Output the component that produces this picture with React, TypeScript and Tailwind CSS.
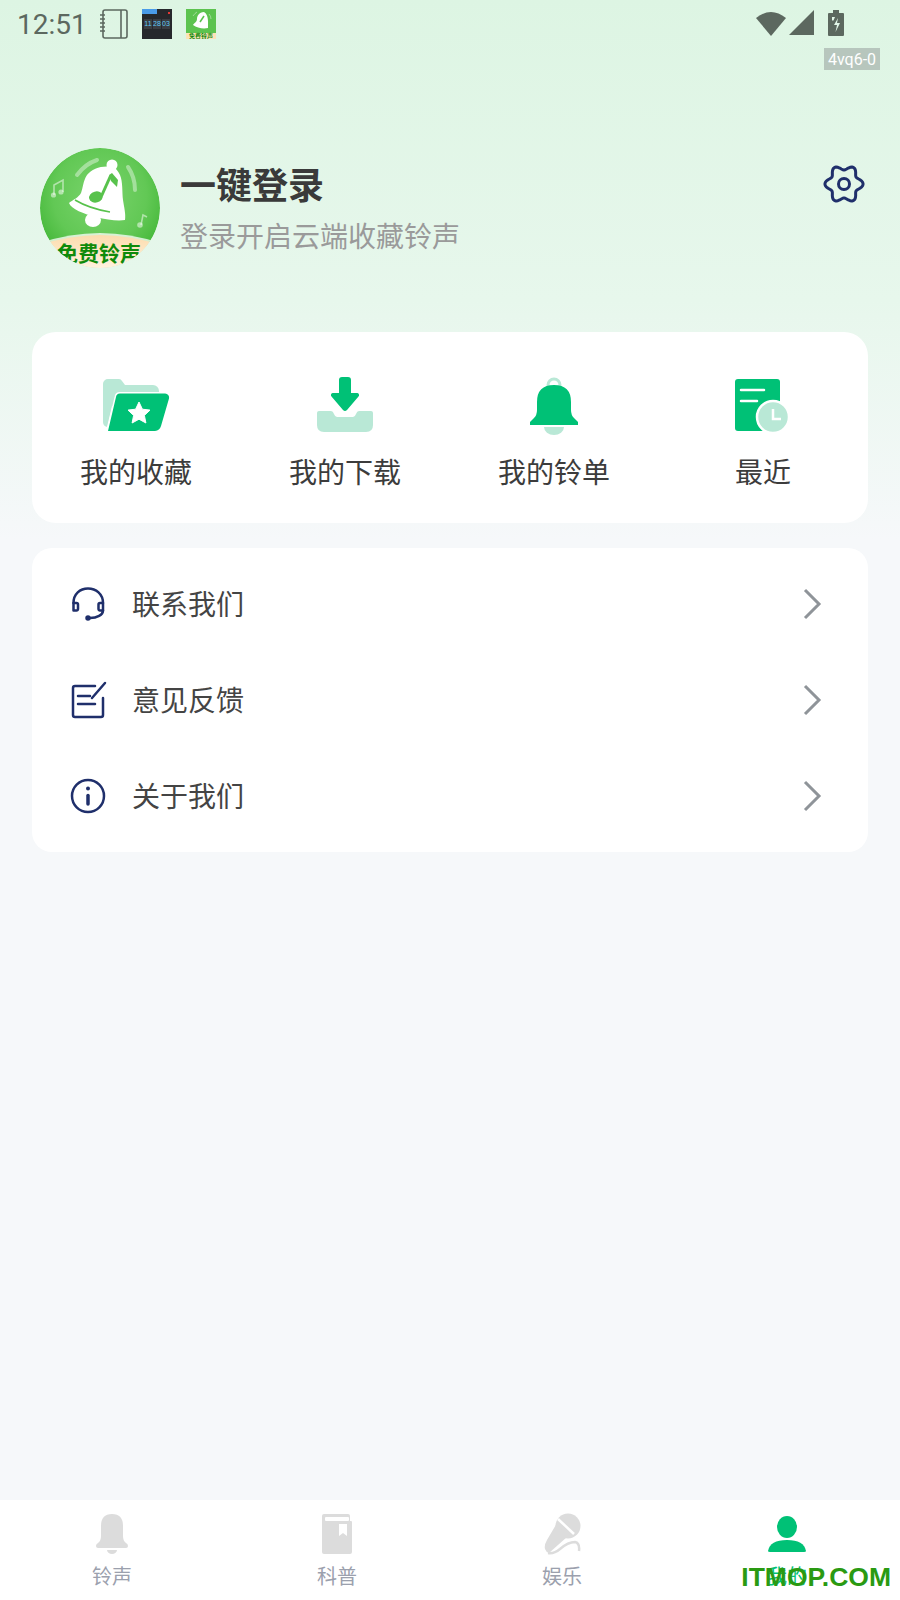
const NAVY = "#1f2f6b";
const GREEN = "#00c176";
const MINT = "#b9e8d6";
const GRAY = "#dcdcdc";

// wavy six-lobed outline for the settings gear
function gearPath(cx: number, cy: number) {
  const pts: string[] = [];
  for (let i = 0; i < 72; i++) {
    const a = (i / 72) * Math.PI * 2;
    const r = 16.5 + 2.6 * Math.cos(6 * a);
    pts.push(`${(cx + r * Math.cos(a)).toFixed(2)} ${(cy + r * Math.sin(a)).toFixed(2)}`);
  }
  return `M${pts.join("L")}Z`;
}

function BellLogo({ className }: { className?: string }) {
  return (
    <svg viewBox="0 0 120 120" className={className}>
      <defs>
        <radialGradient id="logoBg" cx="0.5" cy="0.4" r="0.6">
          <stop offset="0" stopColor="#7ad46c" />
          <stop offset="0.65" stopColor="#62c855" />
          <stop offset="1" stopColor="#43b738" />
        </radialGradient>
        <linearGradient id="logoBand" x1="0" y1="0" x2="0" y2="1">
          <stop offset="0" stopColor="#fcdcae" />
          <stop offset="1" stopColor="#fff2de" />
        </linearGradient>
      </defs>
      <circle cx="60" cy="60" r="60" fill="url(#logoBg)" />
      <path d="M37 27Q45 16 57 12" fill="none" stroke="#fff" strokeOpacity="0.4" strokeWidth="4" strokeLinecap="round" />
      <path d="M88 19Q95 29 95 42" fill="none" stroke="#fff" strokeOpacity="0.4" strokeWidth="4" strokeLinecap="round" />
      <path d="M14 47V37L23 32V44" fill="none" stroke="#fff" strokeOpacity="0.5" strokeWidth="1.6" />
      <circle cx="13.500" cy="47" r="2.600" fill="#fff" fillOpacity="0.5" />
      <circle cx="21" cy="44" r="2.600" fill="#fff" fillOpacity="0.5" />
      <path d="M101 77L103 67L107 69" fill="none" stroke="#fff" strokeOpacity="0.5" strokeWidth="1.6" />
      <circle cx="100" cy="77" r="2.800" fill="#fff" fillOpacity="0.5" />
      <ellipse cx="53" cy="72" rx="8" ry="7" fill="#fff" />
      <path d="M73 19C63 17 52 20 47 27C43 33 43 40 41 45C39 49 33 52 29 55C31 61 44 66 56 69C67 72 78 73 85 72C86 66 84 59 83 52C82 44 83 34 80 27C78 23 76 20 73 19Z" fill="#fff" />
      <circle cx="72" cy="17" r="5.500" fill="#fff" />
      <path d="M35 52C45 58 58 62 70 64" fill="none" stroke="#58c24c" strokeWidth="1.600" />
      <ellipse cx="56" cy="49" rx="7" ry="5.500" fill="#58c24c" transform="rotate(-15 56 49)" />
      <path d="M61.500 48L70.500 28" fill="none" stroke="#58c24c" strokeWidth="3" />
      <path d="M69 27L72 25L78 32L77 39L71 33Z" fill="#58c24c" />
      <path d="M0 95Q60 75 120 95V120H0Z" fill="#fff" fillOpacity="0.75" />
      <path d="M0 97Q60 77 120 97V120H0Z" fill="url(#logoBand)" />
    </svg>
  );
}

function MiniClock() {
  return (
    <div className="w-[30px] h-[30px] bg-[#26282c] flex flex-col relative">
      <div className="w-[15px] h-[5px] bg-[#4a9be8]" />
      <div className="absolute right-[2px] top-[3px] w-[2px] h-[2px] bg-[#e53935]" />
      <div className="mt-[5px] flex justify-center gap-[1px] text-[7px] leading-[10px] text-[#5cc8f5] font-['Liberation_Sans',sans-serif]">
        <span className="w-[8px] bg-[#3a3d42] text-center">11</span>
        <span className="w-[8px] bg-[#3a3d42] text-center">28</span>
        <span className="w-[8px] bg-[#3a3d42] text-center">03</span>
      </div>
    </div>
  );
}

function MiniLogo() {
  return (
    <div className="w-[30px] h-[30px] bg-[#5cc34f] flex flex-col items-center overflow-hidden">
      <svg viewBox="0 0 30 24" className="w-[30px] h-[24px]">
        <path d="M18 3C13 3 11 7 11 10C11 13 8 14 7 16C11 19 17 20 22 19C22 14 23 6 18 3Z" fill="#fff" />
        <path d="M14 13L18 7" stroke="#58c24c" strokeWidth="1.5" />
        <path d="M7 7Q9 4 11 3M23 5Q25 7 25 10" stroke="#fff" strokeOpacity="0.4" fill="none" />
      </svg>
      <div className="w-[30px] h-[6px] bg-[#fde2b8] text-[6px] leading-[6px] font-bold text-center text-[#0f8a0a]">免费铃声</div>
    </div>
  );
}

function StatusBar() {
  return (
    <div className="h-[48px] flex items-start pl-[17px] pt-[9px] text-[#5c685f]">
      <span className="w-[83px] text-[28px] leading-[32px] font-['Roboto',sans-serif]">12:51</span>
      <svg width="28" height="30" viewBox="0 0 28 30" fill="none" stroke="#5c685f" strokeWidth="1.6">
        <rect x="3" y="1" width="24" height="28" rx="2" />
        <path d="M21 1V29M0 6H5M0 10H5M0 14H5M0 18H5M0 22H5" />
      </svg>
      <div className="ml-[14px]"><MiniClock /></div>
      <div className="ml-[14px]"><MiniLogo /></div>
      <div className="ml-auto flex items-start pr-[56px] pt-[1px]">
        <svg width="30" height="26" viewBox="0 0 30 26"><path d="M0 8Q15 -4 30 8L15 26Z" fill="#5c685f" /></svg>
        <svg width="25" height="25" viewBox="0 0 25 25" className="ml-[3px]"><path d="M25 0V25H0Z" fill="#5c685f" /></svg>
        <svg width="16" height="26" viewBox="0 0 16 26" className="ml-[14px]">
          <path d="M5 0H11V3H15A1 1 0 0 1 16 4V25A1 1 0 0 1 15 26H1A1 1 0 0 1 0 25V4A1 1 0 0 1 1 3H5Z" fill="#5c685f" />
          <path d="M10 8L6 15H9L7.500 22L12 13H9Z" fill="#e2f6e8" />
          <path d="M4 7H7L5.500 10.500H4Z" fill="#e2f6e8" />
        </svg>
      </div>
    </div>
  );
}

function Header() {
  return (
    <div className="mt-[100px] ml-[40px] mr-[34px] h-[120px] flex items-start">
      <div className="relative w-[120px] h-[120px] rounded-full overflow-hidden shrink-0">
        <BellLogo className="w-[120px] h-[120px]" />
        <span className="absolute left-[17px] top-[91px] text-[21px] leading-[26px] font-bold whitespace-nowrap text-[#0f8a0a]">免费铃声</span>
      </div>
      <div className="ml-[20px] pt-[12px]">
        <div className="text-[36px] leading-[46px] font-bold text-[#3a3a3a]">一键登录</div>
        <div className="mt-[10px] text-[28px] leading-[38px] text-[#9a9a9a]">登录开启云端收藏铃声</div>
      </div>
      <svg width="44" height="44" viewBox="0 0 44 44" fill="none" stroke={NAVY} strokeWidth="3" className="ml-auto mt-[14px]">
        <path d={gearPath(22, 22)} strokeLinejoin="round" />
        <circle cx="22" cy="22" r="5.500" />
      </svg>
    </div>
  );
}

const FolderIcon = (
  <svg width="72" height="58" viewBox="0 0 72 58">
    <path d="M3 8A5 5 0 0 1 8 3H19A4 4 0 0 1 22 5L25 9H53A6 6 0 0 1 59 15V30H12L7 51Q3 50 3 46Z" fill={MINT} />
    <path d="M20 17.500H65A4 4 0 0 1 69 22.500L61 50A7 7 0 0 1 55 55H8L16 21A4 4 0 0 1 20 17.500Z" fill={GREEN} stroke="#fff" strokeWidth="3" paintOrder="stroke" />
    <path d="M39 26L42.400 33.200L50 34.100L44.400 39.400L45.900 47L39 43.200L32.100 47L33.600 39.400L28 34.100L35.600 33.200Z" fill="#fff" stroke="#fff" strokeLinejoin="round" />
  </svg>
);

const DownloadIcon = (
  <svg width="58" height="58" viewBox="0 0 58 58">
    <path d="M3 35H15Q17 35 18 38Q19 41 21 41H37Q39 41 40 38Q41 35 43 35H55Q57 35 57 37V49Q57 56 50 56H8Q1 56 1 49V37Q1 35 3 35Z" fill={MINT} />
    <path d="M23 4A3 3 0 0 1 26 1H32A3 3 0 0 1 35 4V17H41A2 2 0 0 1 42.500 20.400L31 34A3 3 0 0 1 27 34L15.500 20.400A2 2 0 0 1 17 17H23Z" fill={GREEN} />
  </svg>
);

const BellIcon = (
  <svg width="56" height="62" viewBox="0 0 56 62">
    <circle cx="28" cy="9" r="6" fill="none" stroke={MINT} strokeWidth="3" />
    <path d="M4 49V46L8 42Q11 39 11 34V26Q11 9 28 9Q45 9 45 26V34Q45 39 48 42L52 46V49Z" fill={GREEN} />
    <path d="M18 51H38A10 8 0 0 1 18 51Z" fill={MINT} />
  </svg>
);

const RecentIcon = (
  <svg width="62" height="58" viewBox="0 0 62 58">
    <rect x="3" y="3" width="45" height="52" rx="3" fill={GREEN} />
    <path d="M9 14H32M9 25H25" stroke="#fff" strokeWidth="2.500" strokeLinecap="round" />
    <circle cx="41" cy="41" r="16" fill={MINT} stroke="#fff" strokeWidth="2.500" />
    <path d="M41 33V43H49" fill="none" stroke="#fff" strokeWidth="2.500" />
  </svg>
);

const shortcuts = [
  { label: "我的收藏", icon: FolderIcon },
  { label: "我的下载", icon: DownloadIcon },
  { label: "我的铃单", icon: BellIcon },
  { label: "最近", icon: RecentIcon },
];

const HeadsetIcon = (
  <svg width="40" height="40" viewBox="0 0 40 40" fill="none" stroke={NAVY} strokeWidth="2.500" strokeLinecap="round" strokeLinejoin="round">
    <path d="M5.500 19C5.500 10 12 4.500 20 4.500S35 10 35 19" />
    <path d="M5.500 19H8.500A1.500 1.500 0 0 1 10 20.500V25A1.500 1.500 0 0 1 8.500 26.500H5.500Z" />
    <path d="M35 19H32A1.500 1.500 0 0 0 30.500 20.500V25A1.500 1.500 0 0 0 32 26.500H35Z" />
    <path d="M35 26.500C35 31 29 34 22 34" />
    <circle cx="20" cy="34" r="1.500" fill={NAVY} />
  </svg>
);

const FeedbackIcon = (
  <svg width="40" height="40" viewBox="0 0 40 40" fill="none" stroke={NAVY} strokeWidth="2.500" strokeLinecap="round" strokeLinejoin="round">
    <path d="M27 6H7A2 2 0 0 0 5 8V35A2 2 0 0 0 7 37H33A2 2 0 0 0 35 35V18" />
    <path d="M24 18L37 3" />
    <path d="M10 16H22M10 24H27" />
  </svg>
);

const InfoIcon = (
  <svg width="40" height="40" viewBox="0 0 40 40" fill="none" stroke={NAVY} strokeWidth="2.500" strokeLinecap="round">
    <circle cx="20" cy="20" r="16" />
    <circle cx="20" cy="12.500" r="2" fill={NAVY} stroke="none" />
    <path d="M20 19.500V28" strokeWidth="3.500" />
  </svg>
);

const links = [
  { label: "联系我们", icon: HeadsetIcon },
  { label: "意见反馈", icon: FeedbackIcon },
  { label: "关于我们", icon: InfoIcon },
];

const tabs = [
  {
    label: "铃声",
    icon: (
      <svg width="36" height="42" viewBox="0 0 36 42" fill={GRAY}>
        <path d="M2 33Q2 31 4 30Q7 28 7 23V13Q7 1 18 1Q29 1 29 13V23Q29 28 32 30Q34 31 34 33Q34 35 32 35H4Q2 35 2 33Z" />
        <path d="M13 37H23A5 4 0 0 1 13 37Z" />
      </svg>
    ),
  },
  {
    label: "科普",
    icon: (
      <svg width="36" height="42" viewBox="0 0 36 42">
        <path d="M3 3A2 2 0 0 1 5 1H29A2 2 0 0 1 31 3V8H32A1 1 0 0 1 33 9V39A2 2 0 0 1 31 41H5A2 2 0 0 1 3 39Z" fill={GRAY} />
        <rect x="6" y="4" width="24" height="4" rx="1" fill="#fff" />
        <path d="M20 11H28V23L24 20L20 23Z" fill="#fff" />
      </svg>
    ),
  },
  {
    label: "娱乐",
    icon: (
      <svg width="40" height="42" viewBox="0 0 40 42" fill="none">
        <circle cx="26" cy="13" r="12.500" fill={GRAY} />
        <path d="M15 10L5 27Q2 32 3 36Q4 39 7 40L25 24Z" fill={GRAY} />
        <path d="M16 6L32 21" stroke="#fff" strokeWidth="2.500" />
        <path d="M6 40Q12 41 18 36Q26 29 33 29Q38 30 37 38" stroke={GRAY} strokeWidth="2.500" />
      </svg>
    ),
  },
  {
    label: "我的",
    active: true,
    icon: (
      <svg width="40" height="42" viewBox="0 0 40 42" fill={GREEN}>
        <ellipse cx="20" cy="14" rx="10" ry="11" />
        <path d="M1 38Q3 27 20 27Q37 27 39 38Q39 39 37 39H3Q1 39 1 38Z" />
      </svg>
    ),
  },
];

export default function App() {
  return (
    <div className="relative w-[900px] h-[1600px] flex flex-col overflow-hidden bg-[linear-gradient(180deg,#ddf5e3_0px,#e7f7ec_300px,#f6f8fa_540px)] font-['Noto_Sans_CJK_SC','Noto_Sans',sans-serif]">
      <StatusBar />
      <span className="absolute left-[824px] top-[48px] w-[56px] h-[22px] pt-[1px] bg-[#b7c6bd] text-center text-[16px] leading-[22px] text-white font-['Roboto',sans-serif]">4vq6-0</span>
      <Header />

      {/* shortcuts */}
      <div className="mt-[64px] mx-[32px] h-[191px] grid grid-cols-4 rounded-[24px] bg-white">
        {shortcuts.map((s) => (
          <div key={s.label} className="flex flex-col items-center pt-[44px] pr-[1px]">
            <div className="h-[62px] flex items-start">{s.icon}</div>
            <span className="mt-[14px] text-[28px] leading-[38px] text-[#3c3c3c]">{s.label}</span>
          </div>
        ))}
      </div>

      {/* links */}
      <div className="mt-[25px] mx-[32px] h-[304px] flex flex-col justify-center rounded-[20px] bg-white">
        {links.map((l) => (
          <div key={l.label} className="h-[96px] flex items-center pl-[36px] pr-[46px]">
            {l.icon}
            <span className="ml-[24px] mb-[2px] text-[28px] leading-[38px] text-[#444444]">{l.label}</span>
            <svg width="20" height="32" viewBox="0 0 20 32" fill="none" stroke="#8f9499" strokeWidth="3" className="ml-auto">
              <path d="M3 2L17 16L3 30" />
            </svg>
          </div>
        ))}
      </div>

      {/* bottom tabs */}
      <div className="mt-auto h-[100px] grid grid-cols-4 bg-white">
        {tabs.map((t) => (
          <div key={t.label} className="flex flex-col items-center pt-[13px] pr-[1px]">
            {t.icon}
            <span className={`mt-[7px] text-[20px] leading-[28px] ${t.active ? "text-[#00c176]" : "text-[#9ba0ad]"}`}>{t.label}</span>
          </div>
        ))}
      </div>
      <span className="absolute right-[9px] bottom-[8px] text-[26.5px] leading-[30px] font-bold text-[#2a9a12] font-['Liberation_Sans',sans-serif]">ITMOP.COM</span>
    </div>
  );
}
